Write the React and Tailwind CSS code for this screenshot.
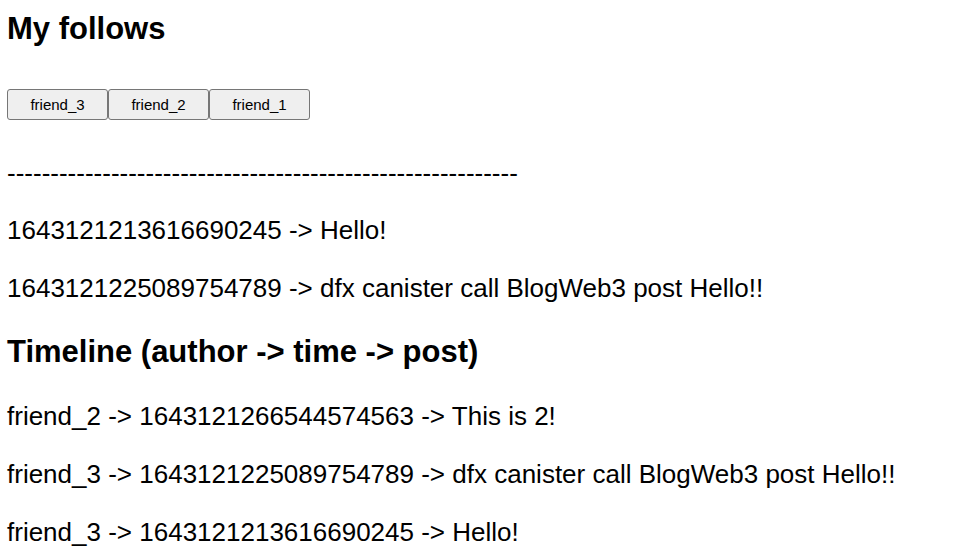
const follows = ["friend_3", "friend_2", "friend_1"];

const posts = [
  { time: "1643121213616690245", text: "Hello!" },
  { time: "1643121225089754789", text: "dfx canister call BlogWeb3 post Hello!!" },
];

const timeline = [
  { author: "friend_2", time: "1643121266544574563", text: "This is 2!" },
  { author: "friend_3", time: "1643121225089754789", text: "dfx canister call BlogWeb3 post Hello!!" },
  { author: "friend_3", time: "1643121213616690245", text: "Hello!" },
];

const divider = "-".repeat(59);

export default function App() {
  return (
    <main className="bg-white px-[7px] pt-[9px] font-['Liberation_Sans',Arial,sans-serif] text-[26px] leading-[30px] text-black">
      <section>
        <h2 className="text-[31px] leading-[40px] font-bold">My follows</h2>
        <div className="mt-10 flex">
          {follows.map((name) => (
            <button
              key={name}
              type="button"
              className="h-[31px] w-[101px] rounded-[3px] border border-[#767676] bg-[#efefef] text-[15px] leading-[18px] hover:bg-[#e5e5e5]"
            >
              {name}
            </button>
          ))}
        </div>
      </section>
      <section className="mt-[38px] flex flex-col">
        <p className="mb-[27px]">{divider}</p>
        <div className="flex flex-col gap-7">
          {posts.map((post) => (
            <p key={post.time}>{`${post.time} -> ${post.text}`}</p>
          ))}
        </div>
      </section>
      <section className="mt-[29px]">
        <h2 className="text-[31px] leading-[40px] font-bold">{"Timeline (author -> time -> post)"}</h2>
        <div className="mt-[29px] flex flex-col gap-7">
          {timeline.map((post) => (
            <p key={post.time}>{`${post.author} -> ${post.time} -> ${post.text}`}</p>
          ))}
        </div>
      </section>
    </main>
  );
}
